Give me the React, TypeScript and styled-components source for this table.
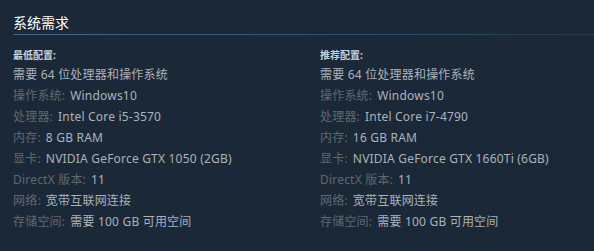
import styled, { createGlobalStyle } from "styled-components";

const GlobalStyle = createGlobalStyle`
    html, body {
        margin: 0;
        padding: 0;
        background: #1b2838;
    }
    body {
        font-family: "Noto Sans", "Noto Sans CJK SC", sans-serif;
    }
`

type Spec = { label?: string; value: string }

const minimum: Spec[] = [
    { value: "需要 64 位处理器和操作系统" },
    { label: "操作系统:", value: "Windows10" },
    { label: "处理器:", value: "Intel Core i5-3570" },
    { label: "内存:", value: "8 GB RAM" },
    { label: "显卡:", value: "NVIDIA GeForce GTX 1050 (2GB)" },
    { label: "DirectX 版本:", value: "11" },
    { label: "网络:", value: "宽带互联网连接" },
    { label: "存储空间:", value: "需要 100 GB 可用空间" },
]

const recommended: Spec[] = [
    { value: "需要 64 位处理器和操作系统" },
    { label: "操作系统:", value: "Windows10" },
    { label: "处理器:", value: "Intel Core i7-4790" },
    { label: "内存:", value: "16 GB RAM" },
    { label: "显卡:", value: "NVIDIA GeForce GTX 1660Ti (6GB)" },
    { label: "DirectX 版本:", value: "11" },
    { label: "网络:", value: "宽带互联网连接" },
    { label: "存储空间:", value: "需要 100 GB 可用空间" },
]

const SpecColumn = ({ title, items }: { title: string; items: Spec[] }) => (
    <Column>
        <ColumnTitle>{title}</ColumnTitle>
        <SpecList>
            {items.map((item, i) => (
                <SpecRow key={i}>
                    {item.label && <Label>{item.label}</Label>}
                    {item.value}
                </SpecRow>
            ))}
        </SpecList>
    </Column>
)

const App = () => {
    return (
        <Page>
            <GlobalStyle />
            <Heading>系统需求</Heading>
            <Columns>
                <SpecColumn title="最低配置:" items={minimum} />
                <SpecColumn title="推荐配置:" items={recommended} />
            </Columns>
        </Page>
    )
}

export default App;

const Page = styled.div`
    width: 594px;
    height: 251px;
    box-sizing: border-box;
    padding: 14px 0 0 13px;
    background: #1b2838;
    overflow: hidden;
`

const Heading = styled.h2`
    margin: 0;
    padding-bottom: 2px;
    font-size: 14px;
    line-height: 18px;
    font-weight: 400;
    color: #ffffff;
    border-bottom: 1px solid transparent;
    border-image: linear-gradient(to right, #3b6e8c 0%, #2a4a63 70%, #233a50 100%) 1;
`

const Columns = styled.div`
    display: grid;
    grid-template-columns: 307px 1fr;
    margin-top: 13px;
`

const Column = styled.div`
    display: flex;
    flex-direction: column;
`

const ColumnTitle = styled.strong`
    font-size: 10px;
    line-height: 14px;
    font-weight: 700;
    color: #c6d4df;
    margin-bottom: 2px;
`

const SpecList = styled.ul`
    list-style: none;
    margin: 0;
    padding: 0;
`

const SpecRow = styled.li`
    font-size: 12px;
    line-height: 21px;
    letter-spacing: 0.2px;
    color: #acb2b8;
    white-space: nowrap;
`

const Label = styled.span`
    color: #61686d;
    margin-right: 5px;
`
